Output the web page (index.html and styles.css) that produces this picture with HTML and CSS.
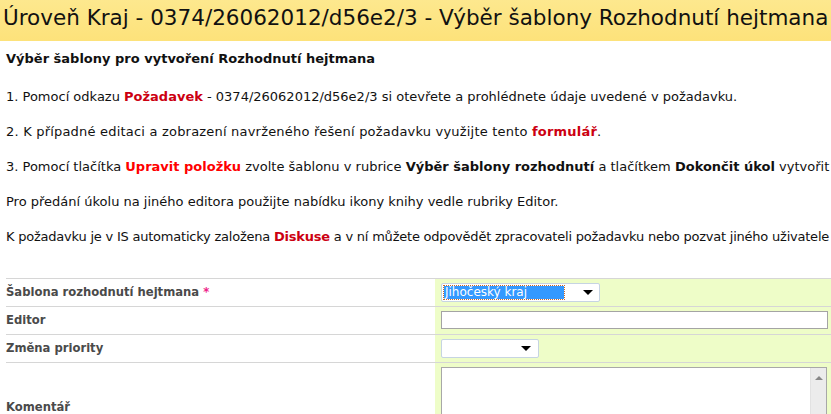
FILE: index.html
```html
<!DOCTYPE html>
<html lang="cs">
<head>
<meta charset="utf-8">
<title>Výběr šablony Rozhodnutí hejtmana</title>
<link rel="stylesheet" href="styles.css">
</head>
<body>
<header class="page-head">
  <h1 class="page-title">Úroveň Kraj - 0374/26062012/d56e2/3 - Výběr šablony Rozhodnutí hejtmana</h1>
</header>
<main class="content">
  <section class="intro">
    <h2 class="intro-title">Výběr šablony pro vytvoření Rozhodnutí hejtmana</h2>
    <p class="intro-line">1. Pomocí odkazu <a class="link link-dark">Požadavek</a> - 0374/26062012/d56e2/3 si otevřete a prohlédnete údaje uvedené v požadavku.</p>
    <p class="intro-line loose">2. K případné editaci a zobrazení navrženého řešení požadavku využijte tento <a class="link link-dark">formulář</a>.</p>
    <p class="intro-line">3. Pomocí tlačítka <span class="link link-bright">Upravit položku</span> zvolte šablonu v rubrice <b>Výběr šablony rozhodnutí</b> a tlačítkem <b>Dokončit úkol</b> vytvořit</p>
    <p class="intro-line">Pro předání úkolu na jiného editora použijte nabídku ikony knihy vedle rubriky Editor.</p>
    <p class="intro-line tighter">K požadavku je v IS automaticky založena <a class="link link-dark">Diskuse</a> a v ní můžete odpovědět zpracovateli požadavku nebo pozvat jiného uživatele</p>
  </section>
  <section class="form">
    <div class="form-row">
      <div class="form-label">Šablona rozhodnutí hejtmana <span class="req">*</span></div>
      <div class="form-value">
        <div class="select select-wide focused"><span class="select-text"><span class="sel-hl">Jihočeský kraj</span></span><span class="select-arrow"></span></div>
      </div>
    </div>
    <div class="form-row">
      <div class="form-label">Editor</div>
      <div class="form-value"><div class="text-input"></div></div>
    </div>
    <div class="form-row">
      <div class="form-label">Změna priority</div>
      <div class="form-value">
        <div class="select select-narrow"><span class="select-text"></span><span class="select-arrow"></span></div>
      </div>
    </div>
    <div class="form-row form-row-tall">
      <div class="form-label form-label-bottom">Komentář</div>
      <div class="form-value">
        <div class="textarea"><div class="textarea-body"></div><div class="scrollbar"><span class="scroll-up"></span></div></div>
      </div>
    </div>
  </section>
</main>
</body>
</html>
```

FILE: styles.css
```css
html, body {
  margin: 0;
  padding: 0;
  background: #ffffff;
  overflow: hidden;
}
body {
  width: 831px;
  height: 414px;
  font-family: "DejaVu Sans", Verdana, sans-serif;
  color: #111;
}
.page-head {
  height: 41px;
  background: linear-gradient(#fde88e, #fde27a);
  padding-left: 3px;
  overflow: hidden;
  white-space: nowrap;
}
.page-title {
  margin: 0;
  font-weight: normal;
  font-size: 21.5px;
  line-height: 33px;
  padding-top: 1px;
  color: #111;
}
.content {
  padding: 0 0 0 6px;
}
.intro {
  display: flex;
  flex-direction: column;
  gap: 20px;
  padding-top: 10px;
}
.intro-title {
  margin: 0 0 2px 0;
  font-size: 13px;
  font-weight: bold;
  line-height: 16px;
}
.intro-line {
  margin: 0;
  font-size: 13px;
  line-height: 15px;
  white-space: nowrap;
}
.intro-line.loose { letter-spacing: 0.2px; }
.intro-line.tighter { letter-spacing: -0.22px; }
.intro-line b { font-weight: bold; }
.link { font-weight: bold; text-decoration: none; }
.link-dark { color: #cc0011; }
.link-bright { color: #ff0000; }
.form {
  margin-top: 34px;
  border-top: 1px solid #d6d6d6;
}
.form-row {
  display: grid;
  grid-template-columns: 429px 1fr;
  border-bottom: 1px solid #d6d6d6;
  height: 27px;
}
.form-row-tall {
  height: 60px;
  border-bottom: none;
}
.form-label {
  font-size: 11.6px;
  font-weight: bold;
  color: #4a4a4a;
  line-height: 27px;
  white-space: nowrap;
}
.form-label-bottom {
  line-height: 15px;
  padding-top: 37px;
}
.req { color: #ee2288; }
.form-value {
  background: #eefdc8;
  padding: 4px 0 0 6px;
}
.select {
  box-sizing: border-box;
  height: 19px;
  background: #fff;
  border: 1px solid #c6d4e2;
  border-radius: 2px;
  display: flex;
  align-items: center;
  font-size: 12px;
}
.select-wide { width: 159px; }
.select-narrow { width: 98px; }
.select-text {
  flex: 1;
  padding: 0 2px;
  display: flex;
}
.sel-hl {
  flex: 1;
  background: #3399ff;
  color: #fff;
  line-height: 13px;
  outline: 1px dotted #c96a2c;
  padding-left: 1px;
  margin-right: 17px;
}
.select-arrow {
  width: 0;
  height: 0;
  border-left: 5px solid transparent;
  border-right: 5px solid transparent;
  border-top: 5px solid #000;
  margin-right: 6px;
}
.select-narrow .select-arrow { margin-right: 7px; }
.text-input {
  box-sizing: border-box;
  width: 387px;
  height: 18px;
  background: #fff;
  border: 1px solid #a4a4a4;
}
.textarea {
  box-sizing: border-box;
  width: 386px;
  height: 60px;
  background: #fff;
  border: 1px solid #a8a8a8;
  border-bottom: none;
  display: flex;
}
.textarea-body { flex: 1; }
.scrollbar {
  width: 16px;
  background: #ececec;
  border-left: 1px solid #e2e2e2;
  display: flex;
  justify-content: center;
  padding-top: 8px;
  box-sizing: border-box;
}
.scroll-up {
  width: 0;
  height: 0;
  border-left: 4px solid transparent;
  border-right: 4px solid transparent;
  border-bottom: 4px solid #888;
}
```
